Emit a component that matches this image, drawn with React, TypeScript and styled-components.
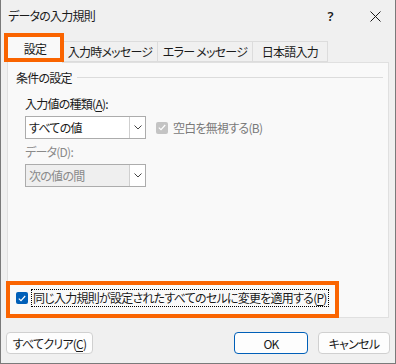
import React from "react";
import styled, { createGlobalStyle } from "styled-components";

const Global = createGlobalStyle`
  html, body { margin: 0; padding: 0; background: #f0f0f0; }
  * { box-sizing: border-box; }
  body {
    font-family: "Noto Sans CJK JP", "Noto Sans", sans-serif;
    font-size: 12px;
    font-feature-settings: "palt";
    letter-spacing: -0.75px;
    color: #1a1a1a;
  }
`;

const Window = styled.div`
  position: relative;
  width: 396px;
  height: 364px;
  background: #f0f0f0;
  border: 1px solid #7a7a7a;
  border-top: none;
  display: flex;
  flex-direction: column;
  overflow: hidden;
`;

const TitleBar = styled.div`
  height: 32px;
  display: flex;
  align-items: center;
  padding-left: 7px;
`;

const Title = styled.div`
  flex: 1;
  font-size: 12px;
  line-height: 16px;
`;

const CaptionButton = styled.div<{ $w: number }>`
  width: ${(p) => p.$w}px;
  height: 32px;
  display: flex;
  align-items: center;
  justify-content: center;
  font-family: "Noto Sans", sans-serif;
  font-size: 13px;
  font-weight: 600;
`;

const TabRow = styled.div`
  height: 30px;
  display: flex;
  align-items: flex-end;
  padding-left: 6px;
  position: relative;
  z-index: 1;
`;

const Tab = styled.div<{ $w: number; $active?: boolean }>`
  width: ${(p) => p.$w}px;
  height: ${(p) => (p.$active ? 27 : 21)}px;
  margin-bottom: ${(p) => (p.$active ? -1 : 0)}px;
  display: flex;
  align-items: center;
  justify-content: center;
  background: ${(p) => (p.$active ? "#f9f9f9" : "#f0f0f0")};
  border: 1px solid #dcdcdc;
  border-bottom: ${(p) => (p.$active ? "none" : "1px solid #dcdcdc")};
  border-left: ${(p) => (p.$active ? "1px solid #dcdcdc" : "none")};
  font-size: 12px;
  padding-bottom: ${(p) => (p.$active ? 4 : 0)}px;
`;

const Panel = styled.div`
  margin: 0 6px;
  height: 256px;
  background: #f9f9f9;
  border: 1px solid #e0e0e0;
  display: flex;
  flex-direction: column;
  padding: 6px 5px 0 8px;
`;

const GroupHeader = styled.div`
  display: flex;
  align-items: center;
  height: 16px;
  gap: 5px;
`;

const GroupLine = styled.div`
  flex: 1;
  height: 1px;
  background: #dcdcdc;
`;

const Indent = styled.div`
  padding-left: 9px;
  display: flex;
  flex-direction: column;
`;

const FieldLabel = styled.div<{ $disabled?: boolean; $top: number }>`
  margin-top: ${(p) => p.$top}px;
  height: 16px;
  line-height: 16px;
  color: ${(p) => (p.$disabled ? "#8a8a8a" : "#1a1a1a")};
`;

const Row = styled.div`
  margin-top: 4px;
  display: flex;
  align-items: center;
`;

const Select = styled.div<{ $disabled?: boolean }>`
  width: 121px;
  height: 23px;
  display: flex;
  border: 1px solid #acacac;
  background: ${(p) => (p.$disabled ? "#efefef" : "#ffffff")};
  color: ${(p) => (p.$disabled ? "#8a8a8a" : "#1a1a1a")};
`;

const SelectValue = styled.div`
  flex: 1;
  display: flex;
  align-items: center;
  padding-left: 3px;
`;

const SelectArrow = styled.div`
  width: 16px;
  background: #ffffff;
  border-left: 1px solid #cfcfcf;
  display: flex;
  align-items: center;
  justify-content: center;
`;

const CheckBox = styled.div<{ $color: string }>`
  width: 12px;
  height: 12px;
  border-radius: 2px;
  background: ${(p) => p.$color};
  display: flex;
  align-items: center;
  justify-content: center;
  flex: none;
`;

const CheckLabel = styled.div<{ $disabled?: boolean }>`
  margin-left: 5px;
  color: ${(p) => (p.$disabled ? "#7a7a7a" : "#1a1a1a")};
`;

const Spacer = styled.div`
  flex: 1;
`;

const ApplyRow = styled.div`
  display: flex;
  align-items: center;
  margin-bottom: 10px;
`;

const FocusLabel = styled.div`
  margin-left: 3px;
  height: 18px;
  line-height: 16px;
  padding: 0 1px;
  border: 1px dotted #000;
  white-space: nowrap;
`;

const Footer = styled.div`
  display: flex;
  align-items: center;
  padding: 14px 5px 0 5px;
  gap: 10px;
`;

const Button = styled.div<{ $w: number; $primary?: boolean }>`
  width: ${(p) => p.$w}px;
  height: 22px;
  display: flex;
  align-items: center;
  justify-content: center;
  background: #fdfdfd;
  border: 1px solid ${(p) => (p.$primary ? "#005fb8" : "#d0d0d0")};
  border-radius: 4px;
  font-size: 12px;
`;

const Acc = styled.span`
  text-decoration: underline;
  text-underline-offset: 2px;
`;

const Highlight = styled.div<{ $l: number; $t: number; $w: number; $h: number }>`
  position: absolute;
  left: ${(p) => p.$l}px;
  top: ${(p) => p.$t}px;
  width: ${(p) => p.$w}px;
  height: ${(p) => p.$h}px;
  border: 4px solid #fa6400;
  pointer-events: none;
  z-index: 5;
`;

const Chevron = () => (
  <svg width="8" height="5" viewBox="0 0 8 5">
    <path d="M0.5 0.5 L4 4 L7.5 0.5" fill="none" stroke="#444" strokeWidth="1" />
  </svg>
);

const Check = () => (
  <svg width="8" height="7" viewBox="0 0 8 7">
    <path d="M0.8 3.6 L3 5.6 L7.2 1" fill="none" stroke="#fff" strokeWidth="1.2" />
  </svg>
);

const CloseIcon = () => (
  <svg width="11" height="11" viewBox="0 0 11 11">
    <path d="M0.5 0.5 L10.5 10.5 M10.5 0.5 L0.5 10.5" stroke="#1a1a1a" strokeWidth="1" />
  </svg>
);

export default function App() {
  return (
    <>
      <Global />
      <Window>
        <TitleBar>
          <Title>データの入力規則</Title>
          <CaptionButton $w={50}>?</CaptionButton>
          <CaptionButton $w={40}>
            <CloseIcon />
          </CaptionButton>
        </TitleBar>
        <TabRow>
          <Tab $w={56} $active>
            設定
          </Tab>
          <Tab $w={95}>入力時メッセージ</Tab>
          <Tab $w={95}>エラー メッセージ</Tab>
          <Tab $w={75}>日本語入力</Tab>
        </TabRow>
        <Panel>
          <GroupHeader>
            条件の設定
            <GroupLine />
          </GroupHeader>
          <Indent>
            <FieldLabel $top={11}>
              入力値の種類(<Acc>A</Acc>):
            </FieldLabel>
            <Row>
              <Select>
                <SelectValue>すべての値</SelectValue>
                <SelectArrow>
                  <Chevron />
                </SelectArrow>
              </Select>
              <CheckBox $color="#c4c4c4" style={{ marginLeft: 10 }}>
                <Check />
              </CheckBox>
              <CheckLabel $disabled>空白を無視する(B)</CheckLabel>
            </Row>
            <FieldLabel $disabled $top={5}>
              データ(D):
            </FieldLabel>
            <Row>
              <Select $disabled>
                <SelectValue>次の値の間</SelectValue>
                <SelectArrow>
                  <Chevron />
                </SelectArrow>
              </Select>
            </Row>
          </Indent>
          <Spacer />
          <ApplyRow>
            <CheckBox $color="#005fb8">
              <Check />
            </CheckBox>
            <FocusLabel>
              同じ入力規則が設定されたすべてのセルに変更を適用する(<Acc>P</Acc>)
            </FocusLabel>
          </ApplyRow>
        </Panel>
        <Footer>
          <Button $w={87}>
            すべてクリア(<Acc>C</Acc>)
          </Button>
          <Spacer />
          <Button $w={74} $primary>
            OK
          </Button>
          <Button $w={72}>キャンセル</Button>
        </Footer>
        <Highlight $l={3} $t={33} $w={60} $h={29} />
        <Highlight $l={5} $t={281} $w={333} $h={37} />
      </Window>
    </>
  );
}
